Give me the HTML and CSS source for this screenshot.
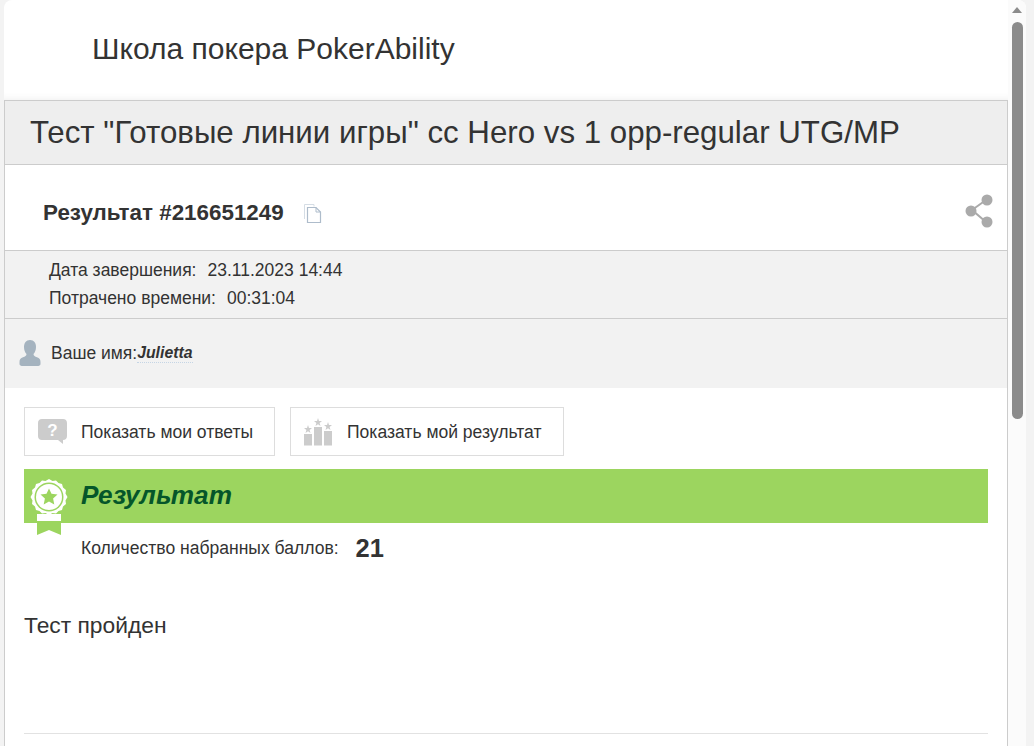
FILE: index.html
```html
<!DOCTYPE html>
<html lang="ru">
<head>
<meta charset="utf-8">
<title>Школа покера PokerAbility</title>
<link rel="stylesheet" href="styles.css">
</head>
<body>
<div class="window">
  <main class="content">
    <header class="brand"><span class="brand-name">Школа покера PokerAbility</span></header>
    <div class="panel">
      <h1 class="title">Тест "Готовые линии игры" cc Hero vs 1 opp-regular UTG/MP</h1>
      <div class="result-head">
        <span class="result-id">Результат #216651249</span>
        <svg class="copy-icon" viewBox="0 0 18 19" width="18" height="19"><path d="M.5 15V.5H10V2.500" fill="none" stroke="#d5dde5" stroke-width="1"/><path d="M3.500 3.500H12L16.500 8V18.500H3.500Z" fill="#fff" stroke="#aebccb" stroke-width="1.200"/><path d="M12 3.500V8H16.500" fill="none" stroke="#aebccb"/></svg>
        <svg class="share-icon" viewBox="0 0 30 36" width="30" height="36"><path d="M22 7 8 17 22 29" fill="none" stroke="#aaa" stroke-width="2"/><circle cx="23" cy="7" r="5.500" fill="#aaa"/><circle cx="7" cy="18" r="5.500" fill="#aaa"/><circle cx="23" cy="29" r="5.500" fill="#aaa"/></svg>
      </div>
      <dl class="meta">
        <div class="meta-row"><dt>Дата завершения:</dt><dd>23.11.2023 14:44</dd></div>
        <div class="meta-row"><dt>Потрачено времени:</dt><dd>00:31:04</dd></div>
      </dl>
      <div class="user">
        <svg class="user-icon" viewBox="0 0 22 26" width="22" height="26"><path d="M11 0C15 0 17 3 17 7C17 10 16 12.500 14.500 14C14.500 16 16 16.500 18 17.300C20.500 18.300 21.500 19.500 21.500 22V24C21.500 25.500 20 26 18 26H4C2 26 .5 25.500 .5 24V22C.5 19.500 1.500 18.300 4 17.300C6 16.500 7.500 16 7.500 14C6 12.500 5 10 5 7C5 3 7 0 11 0Z" fill="#a5b3bf"/></svg>
        <span class="user-label">Ваше имя:</span><em class="user-name">Julietta</em>
      </div>
      <section class="body">
        <div class="actions">
          <button class="action action-answers" type="button">
            <svg viewBox="0 0 29 25" width="29" height="25"><path d="M4 0H25C27.500 0 29 1.500 29 4V17C29 19.500 27.500 21 25 21V25L20 21H4C1.500 21 0 19.500 0 17V4C0 1.500 1.500 0 4 0Z" fill="#ccc"/><text x="14.500" y="17" class="q-mark">?</text></svg>
            <span>Показать мои ответы</span>
          </button>
          <button class="action action-result" type="button">
            <svg class="podium" viewBox="0 0 28 28" width="28" height="28"><path d="M0 16H8V27.500H0ZM10 9H18V27.500H10ZM20 13H28V27.500H20Z" fill="#ccc"/><path d="M4 7 5 10 8 10 5.600 11.900 6.500 15 4 13.200 1.500 15 2.400 11.900 0 10 3 10ZM14 0 15 3 18 3 15.600 4.900 16.500 8 14 6.200 11.500 8 12.400 4.900 10 3 13 3ZM24 4 25 7 28 7 25.600 8.900 26.500 12 24 10.200 21.500 12 22.400 8.900 20 7 23 7Z" fill="#ccc"/></svg>
            <span>Показать мой результат</span>
          </button>
        </div>
        <div class="banner">
          <svg class="medal" viewBox="0 0 38 58" width="38" height="58"><path d="M7 40H31V57L19 52 7 57Z" fill="#9cd55f"/><rect x="7" y="36" width="24" height="7" fill="#fff"/><path d="M19 1 22.500 3 26 2.500 28.500 5 32 6 33 9.500 36 12 35.500 15.500 37.500 19 35.500 22.500 36 26 33 28.500 32 32 28.500 33 26 35.500 22.500 35 19 37 15.500 35 12 35.500 9.500 33 6 32 5 28.500 2 26 2.500 22.500 .5 19 2.500 15.500 2 12 5 9.500 6 6 9.500 5 12 2.500 15.500 3Z" fill="#fff"/><circle cx="19" cy="19" r="14.500" fill="#9cd55f"/><circle cx="19" cy="19" r="13" fill="#fff"/><path d="M19 10.500 21.500 15.800 27.500 16.500 23.100 20.600 24.300 26.500 19 23.600 13.700 26.500 14.900 20.600 10.500 16.500 16.500 15.800Z" fill="#9cd55f"/></svg>
          <h2 class="banner-title">Результат</h2>
        </div>
        <div class="score"><span class="score-label">Количество набранных баллов:</span><strong class="score-value">21</strong></div>
        <p class="verdict">Тест пройден</p>
        <hr class="rule">
      </section>
    </div>
  </main>
  <div class="scrollbar" aria-hidden="true">
    <span class="scroll-arrow"></span>
    <span class="scroll-thumb"></span>
  </div>
</div>
</body>
</html>
```
FILE: styles.css
```css
* { box-sizing: border-box; }
html, body { height: 100%; }
body {
  margin: 0;
  overflow: hidden;
  background: #f3f3f3;
  color: #333;
  font-family: "Liberation Sans", Arial, sans-serif;
}
.window {
  display: flex;
  width: 1022px;
  height: 746px;
  margin-left: 4px;
  background: #fff;
  border-radius: 8px 8px 0 0;
  overflow: hidden;
}
.content { width: 1004px; flex: none; }
.brand {
  height: 100px;
  padding: 31px 0 0 88px;
  box-shadow: inset 0 -8px 8px -8px rgba(0,0,0,.08);
}
.brand-name { font-size: 30px; line-height: 36px; }
.panel {
  border-left: 1px solid #ccc;
  border-right: 1px solid #ccc;
  height: 646px;
  overflow: hidden;
}
.title {
  margin: 0;
  height: 65px;
  padding: 0 0 0 25px;
  background: #eee;
  border-top: 1px solid #ccc;
  border-bottom: 1px solid #ccc;
  font-size: 31.250px;
  font-weight: 400;
  line-height: 64px;
  white-space: nowrap;
}
.result-head {
  display: flex;
  align-items: center;
  height: 86px;
  padding: 8px 13px 0 38px;
  border-bottom: 1px solid #ccc;
}
.result-id { font-size: 22.400px; font-weight: 700; position: relative; top: 1px; }
.copy-icon { margin: 3px 0 0 20px; }
.share-icon { margin: -1px 0 0 auto; }
.meta {
  margin: 0;
  height: 68px;
  padding: 5px 0 0 44px;
  background: #f2f2f2;
  border-bottom: 1px solid #ccc;
  font-size: 17.500px;
  line-height: 28px;
}
.meta-row { display: flex; gap: 11px; }
.meta dt, .meta dd { margin: 0; }
.user {
  display: flex;
  align-items: center;
  height: 69px;
  padding: 0 0 0 14px;
  background: #f2f2f2;
  font-size: 17.500px;
}
.user-icon { margin: -2px 10px 0 0; }
.user-name {
  font-size: 15.800px;
  font-weight: 700;
  border-bottom: 1px dotted #c5d5e5;
}
.body { padding: 19px 19px 0; }
.actions { display: flex; gap: 15px; }
.action {
  display: flex;
  align-items: center;
  height: 49px;
  padding: 2px 14px 0 13px;
  background: #fff;
  border: 1px solid #ddd;
  color: #333;
  font: 17.550px "Liberation Sans", Arial, sans-serif;
  white-space: nowrap;
}
.action-answers { width: 251px; }
.action-result { width: 274px; }
.action svg { flex: none; margin: -2px 14px 0 0; }
.action .podium { margin-right: 15px; }
.q-mark { fill: #fff; font: 700 17px "Liberation Sans", Arial, sans-serif; text-anchor: middle; }
.banner {
  position: relative;
  display: flex;
  align-items: center;
  height: 54px;
  margin-top: 13px;
  padding: 0 0 2px 57px;
  background: #9cd55f;
}
.medal { position: absolute; left: 6px; top: 9px; }
.banner-title {
  margin: 0;
  color: #05562a;
  font-size: 26.200px;
  font-style: italic;
  font-weight: 700;
}
.score {
  display: flex;
  align-items: center;
  height: 52px;
  padding: 0 0 2px 57px;
}
.score-label { font-size: 17.550px; }
.score-value { margin-left: 17px; font-size: 25.500px; }
.verdict { margin: 36px 0 0; font-size: 22.800px; line-height: 28px; }
.rule {
  margin: 94px 0 0;
  border: 0;
  border-top: 1px solid #e2e2e2;
}
.scrollbar {
  position: relative;
  flex: none;
  width: 18px;
  background: #fbfbfb;
}
.scroll-arrow {
  position: absolute;
  left: 4px;
  top: 7px;
  border-left: 5.500px solid transparent;
  border-right: 5.500px solid transparent;
  border-bottom: 6px solid #8b8b8b;
}
.scroll-thumb {
  position: absolute;
  left: 4px;
  top: 22px;
  width: 11px;
  height: 397px;
  background: #8b8b8b;
  border-radius: 6px;
}
```
